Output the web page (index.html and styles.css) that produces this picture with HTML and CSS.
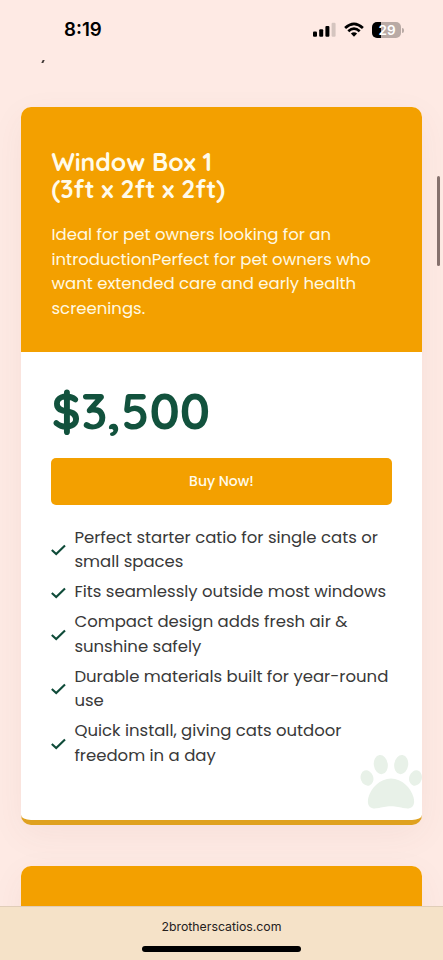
FILE: index.html
```html
<!DOCTYPE html>
<html lang="en">
<head>
<meta charset="utf-8">
<title>2 Brothers Catios</title>
<link rel="stylesheet" href="styles.css">
</head>
<body>
<svg width="0" height="0" class="defs"><symbol id="check" viewBox="0 0 15 12"><path d="M.8 6 5.2 10.1 14 1.400" fill="none" stroke="#0f4b39" stroke-width="2.1"/></symbol></svg>
<div class="screen">
  <header class="status">
    <span class="time">8:19</span>
    <span class="icons">
      <svg width="23" height="16" viewBox="0 0 23 16"><rect x="0" y="9.6" width="4" height="5.2" rx="1.1"/><rect x="6.2" y="7.2" width="4" height="7.6" rx="1.1"/><rect x="12.4" y="4" width="4" height="10.8" rx="1.1"/><rect x="18.6" y=".8" width="4" height="14" rx="1.1" fill="#d5c5bf"/></svg>
      <svg class="wifi" width="20" height="16" viewBox="0 0 20 16"><g fill="none" stroke="#000" stroke-width="2.7"><path d="M1.1 5.9Q10-2.3 18.9 5.9"/><path d="M4.3 9.3Q10 4 15.7 9.3"/></g><path d="M6.9 11.6Q10 9 13.1 11.6L10 14.8Z"/></svg>
      <span class="battery"><span class="level">29</span><i class="cap"></i></span>
    </span>
  </header>
  <span class="mark"></span>
  <main class="plans">
    <article class="card">
      <div class="head">
        <h2>Window Box 1<br>(3ft x 2ft x 2ft)</h2>
        <p>Ideal for pet owners looking for an introductionPerfect for pet owners who want extended care and early health screenings.</p>
      </div>
      <div class="body">
        <div class="price">$3,500</div>
        <a class="buy">Buy Now!</a>
        <ul>
          <li><svg><use href="#check"/></svg><div>Perfect starter catio for single cats or<br>small spaces</div></li>
          <li><svg><use href="#check"/></svg><div>Fits seamlessly outside most windows</div></li>
          <li><svg><use href="#check"/></svg><div>Compact design adds fresh air &amp;<br>sunshine safely</div></li>
          <li><svg><use href="#check"/></svg><div>Durable materials built for year-round<br>use</div></li>
          <li><svg><use href="#check"/></svg><div>Quick install, giving cats outdoor<br>freedom in a day</div></li>
        </ul>
      </div>
      <svg class="paw" width="62" height="54" viewBox="0 0 62 54" fill="#e8f1e8"><ellipse cx="7" cy="23" rx="6.3" ry="7.800" transform="rotate(-18 7 23)"/><ellipse cx="20.8" cy="9.6" rx="7" ry="9.6" transform="rotate(-8 20.8 9.6)"/><ellipse cx="41.2" cy="9.6" rx="7" ry="9.6" transform="rotate(8 41.2 9.6)"/><ellipse cx="55.5" cy="23" rx="6.3" ry="7.800" transform="rotate(18 55.5 23)"/><path d="M31 23.500C42 23.500 51 33 53.600 42.500C55.500 50.500 52 54.300 45 53.300C39 52.400 37 51.300 31 51.300S23 52.400 17 53.300C10 54.300 6.500 50.500 8.400 42.500C11 33 20 23.500 31 23.500Z"/></svg>
    </article>
    <article class="card next"><div class="head"></div></article>
  </main>
  <div class="scroll"></div>
  <footer><span class="url">2brotherscatios.com</span><i class="home"></i></footer>
</div>
</body>
</html>
```
FILE: styles.css
```css
* { box-sizing: border-box; }
body { margin: 0; }
.defs { position: absolute; }
.screen {
  position: relative; width: 443px; height: 960px; overflow: hidden;
  display: flex; flex-direction: column; background: #feeae4;
  font-family: Poppins, Inter, "Open Sans", sans-serif; color: #393939;
}
.status { flex: none; height: 60px; padding: 0 39px 0 64px; display: flex; justify-content: space-between; align-items: center; color: #000; }
.time { font: 600 18.7px/22px Inter, sans-serif; }
.icons { display: flex; align-items: center; }
.wifi { margin: 0 8px 0 8px; }
.battery { display: flex; align-items: center; gap: 1px; }
.level { width: 29px; height: 16px; border-radius: 5px; background: linear-gradient(90deg, #000 30%, #b9aaa5 30%); color: #fff; text-align: center; font: 600 13.5px/16px Inter, sans-serif; padding-left: 1px; }
.cap { width: 2px; height: 5px; border-radius: 0 2px 2px 0; background: #b9aaa5; }
.mark { flex: none; width: 1.500px; height: 3px; margin-left: 42px; background: #403836; transform: skewX(-25deg); }
.plans { flex: none; margin: 44px 21px 0 20.500px; display: flex; flex-direction: column; gap: 41px; }
.card { position: relative; height: 718px; border-radius: 10px; border-bottom: 5px solid #dfa11f; background: #fff; box-shadow: 0 10px 35px rgba(120, 60, 60, .06); }
.head { height: 245px; padding: 41px 31px 0; border-radius: 10px 10px 0 0; background: #f3a000; color: #fffbea; }
h2 { margin: 0; font: 700 24.700px/27px Quicksand, Lato, sans-serif; }
p { margin: 20.800px 0 0; font-size: 16.5px; line-height: 24.750px; color: #fff9e2; }
.body { padding: 29px 30.500px 0 30.900px; }
.price { height: 60px; font: 700 49.400px/60px Quicksand, Lato, sans-serif; color: #12523d; }
.buy { display: block; height: 47px; margin-top: 16.5px; border-radius: 5px; background: #f3a000; color: #fffbea; text-align: center; font-size: 14px; font-weight: 500; line-height: 47px; }
ul { list-style: none; margin: 21.100px 0 0; padding: 0; display: flex; flex-direction: column; gap: 5.1px; }
li { display: flex; align-items: center; gap: 8px; font-size: 16.5px; line-height: 24.750px; white-space: nowrap; }
li svg { flex: none; width: 15px; height: 12px; }
.paw { position: absolute; right: 0; bottom: 11px; }
.scroll { position: absolute; left: 437px; top: 176px; width: 3px; height: 90px; border-radius: 2px; background: #86716d; }
footer { position: absolute; left: 0; right: 0; bottom: 0; height: 54px; border-top: 1px solid #e0cdb8; background: #f5e2c8; color: #24201c; display: flex; flex-direction: column; align-items: center; }
.url { margin-top: 10px; font: 400 12.300px/20px Inter, sans-serif; }
.home { width: 159px; height: 5.500px; margin-top: 9px; border-radius: 3px; background: #000; }
```
